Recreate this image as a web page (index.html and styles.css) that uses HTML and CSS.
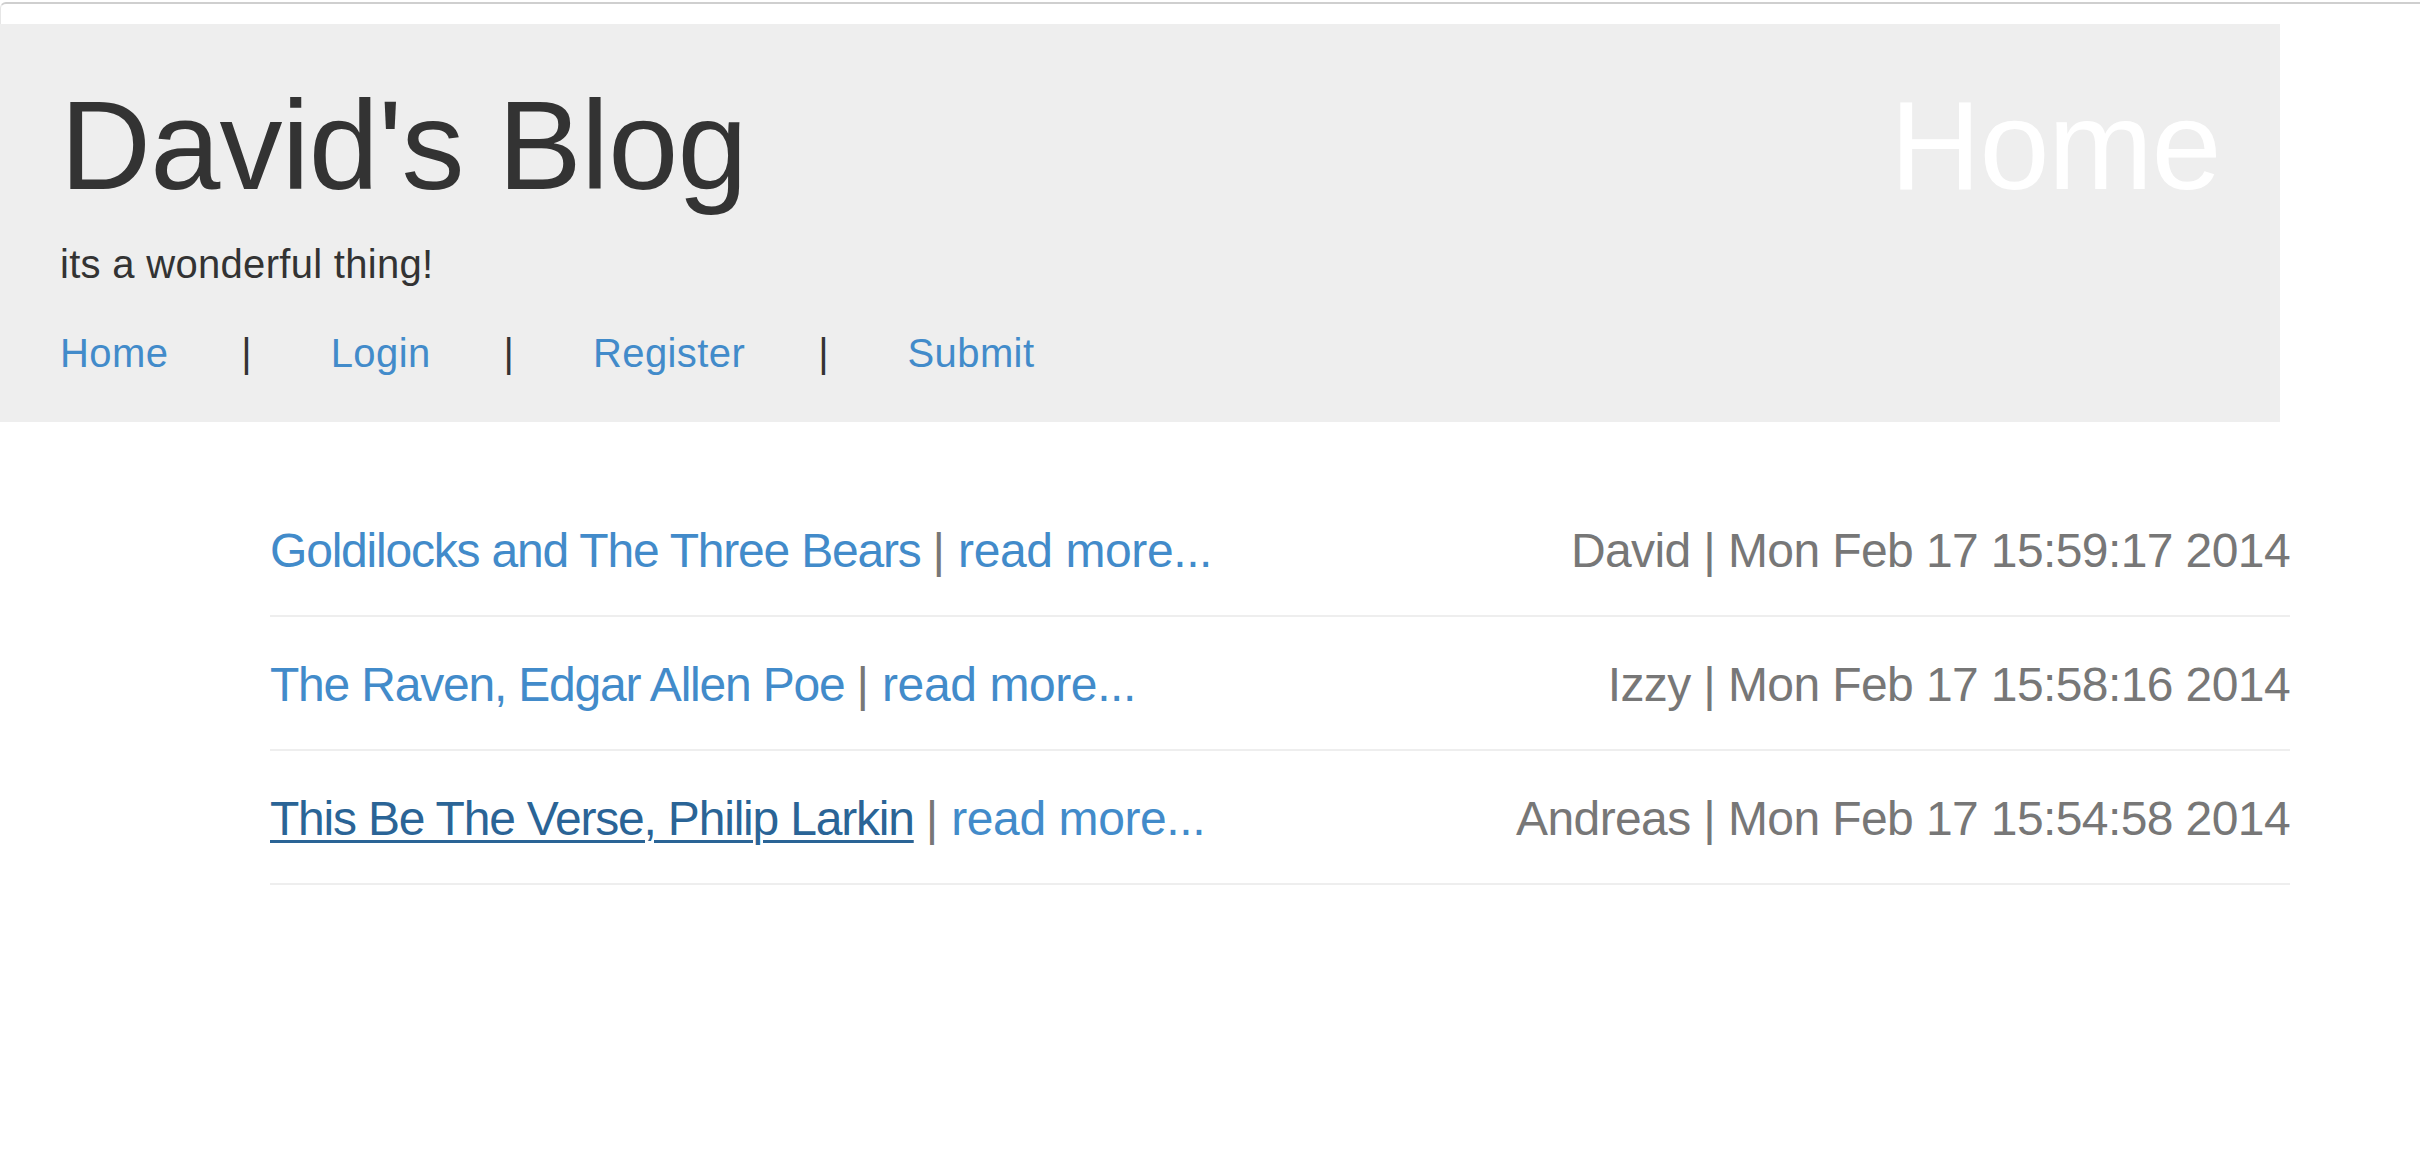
FILE: index.html
```html
<!DOCTYPE html>
<html lang="en">
<head>
<meta charset="utf-8">
<title>David's Blog</title>
<link rel="stylesheet" href="styles.css">
</head>
<body>
<div class="chrome"></div>
<header class="jumbotron">
  <div class="intro">
    <h1 class="title">David's Blog</h1>
    <p class="lead">its a wonderful thing!</p>
    <nav class="nav">
      <a href="#">Home</a><span class="sep">|</span><a href="#">Login</a><span class="sep">|</span><a href="#">Register</a><span class="sep">|</span><a href="#">Submit</a>
    </nav>
  </div>
  <h1 class="page-name">Home</h1>
</header>
<main class="posts">
  <div class="post">
    <div class="post-left"><a href="#" class="post-title">Goldilocks and The Three Bears</a><span class="bar">|</span><a href="#" class="more">read more...</a></div>
    <div class="post-meta">David | Mon Feb 17 15:59:17 2014</div>
  </div>
  <div class="post">
    <div class="post-left"><a href="#" class="post-title">The Raven, Edgar Allen Poe</a><span class="bar">|</span><a href="#" class="more">read more...</a></div>
    <div class="post-meta">Izzy | Mon Feb 17 15:58:16 2014</div>
  </div>
  <div class="post">
    <div class="post-left"><a href="#" class="post-title hover">This Be The Verse, Philip Larkin</a><span class="bar">|</span><a href="#" class="more">read more...</a></div>
    <div class="post-meta">Andreas | Mon Feb 17 15:54:58 2014</div>
  </div>
</main>
</body>
</html>
```
FILE: styles.css
```css
html, body {
  margin: 0;
  padding: 0;
  background: #fff;
}
body {
  padding-top: 2px;
  font-family: "Liberation Sans", Arial, sans-serif;
  color: #333;
}
.chrome {
  height: 20px;
  border-top: 2px solid #cfcfcf;
  border-left: 1px solid #e6e6e6;
  border-top-left-radius: 6px;
}
.jumbotron {
  width: 2280px;
  box-sizing: border-box;
  background: #eeeeee;
  padding: 59px 60px 41px 60px;
  display: flex;
  justify-content: space-between;
  align-items: flex-start;
}
.title, .page-name {
  margin: 0;
  font-size: 126px;
  line-height: 126px;
  font-weight: normal;
  letter-spacing: -0.8px;
}
.title { color: #333; }
.page-name { color: #fff; letter-spacing: -1.5px; }
.lead {
  margin: 27px 0 0;
  font-size: 40px;
  line-height: 56px;
  letter-spacing: 0.3px;
  color: #333;
}
.nav {
  margin-top: 33px;
  display: flex;
  font-size: 40px;
  line-height: 56px;
}
.nav a {
  color: #428bca;
  text-decoration: none;
  letter-spacing: 0.4px;
}
.nav .sep {
  color: #333;
  margin: 0 79px 0 73px;
}
.posts {
  margin: 61px 0 0 270px;
  width: 2020px;
}
.post {
  display: flex;
  justify-content: space-between;
  padding: 35px 0 31px;
  line-height: 66px;
  font-size: 48px;
  border-bottom: 2px solid #eeeeee;
}
.post-left {
  display: flex;
}
.post a {
  color: #428bca;
  text-decoration: none;
}
.post-title {
  letter-spacing: -1.2px;
}
.more {
  letter-spacing: -0.4px;
}
.post a.hover {
  color: #2a6496;
  text-decoration: underline;
  text-decoration-thickness: 3px;
  text-underline-offset: 5px;
}
.bar {
  color: #777;
  margin: 0 13px 0 12px;
}
.post-meta {
  color: #777;
  letter-spacing: -0.6px;
}
```
